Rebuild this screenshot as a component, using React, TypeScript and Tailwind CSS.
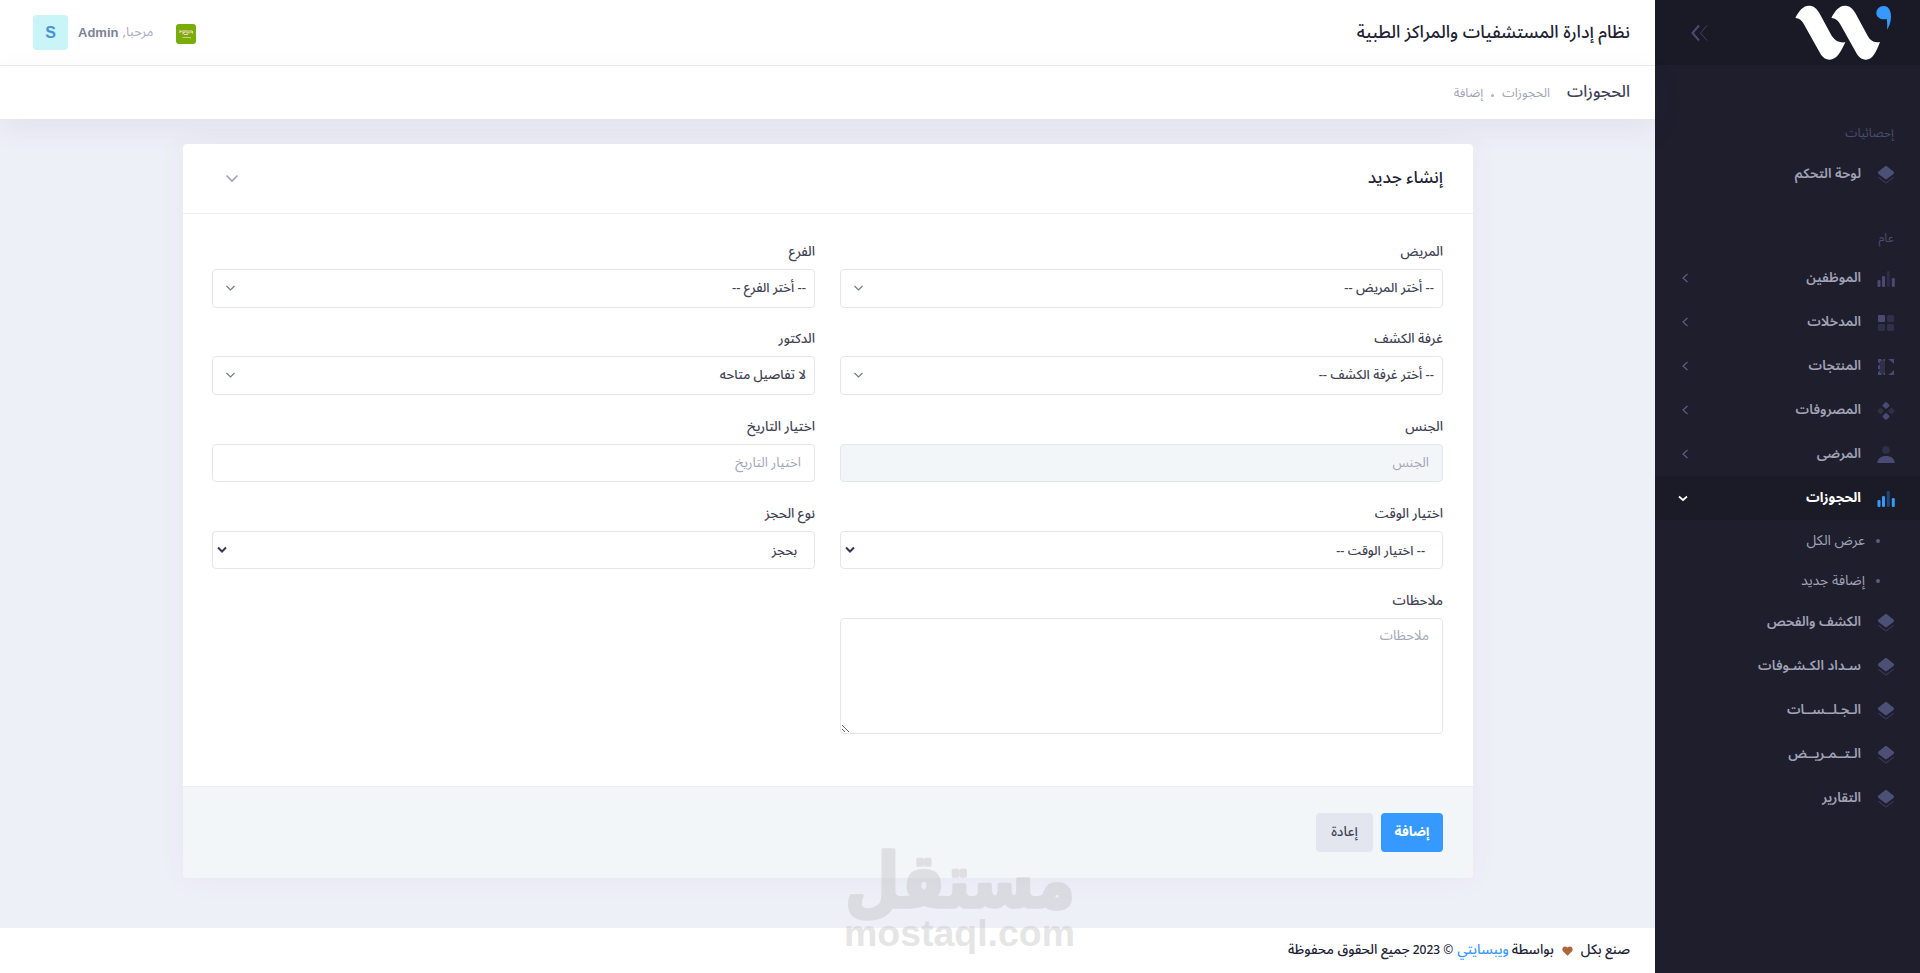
import { useState } from "react";

const FONT = "font-['Noto_Sans_Arabic','DejaVu_Sans','Liberation_Sans',sans-serif]";

type IconProps = { active?: boolean };

function LayersIcon() {
  return (
    <svg width="24" height="24" viewBox="0 0 24 24" fill="none">
      <path
        d="M12.9 3.3 19.5 8.5C20.2 9.1 20.2 10.3 19.5 10.9L12.9 16C12.4 16.4 11.6 16.4 11.1 16L4.5 10.9C3.8 10.3 3.8 9.1 4.5 8.5L11.1 3.3C11.6 2.9 12.4 2.9 12.9 3.3Z"
        fill="#4d4f77"
      />
      <path d="M4.3 14.3 12 20 19.7 14.3" stroke="#494b74" strokeOpacity="0.55" strokeWidth="1.1" />
    </svg>
  );
}

function ChartIcon({ active }: IconProps) {
  const color = active ? "#3699ff" : "#494b74";
  return (
    <svg width="24" height="24" viewBox="0 0 24 24" fill={color}>
      <rect x="3.5" y="13" width="3" height="7" rx="1.2" />
      <rect x="8" y="9" width="3" height="11" rx="1.2" />
      <rect x="12.8" y="4" width="3" height="16" rx="1.2" opacity="0.35" />
      <rect x="17.8" y="11" width="3" height="9" rx="1.2" />
    </svg>
  );
}

function BlocksIcon() {
  return (
    <svg width="24" height="24" viewBox="0 0 24 24" fill="#494b74">
      <rect x="4" y="4" width="7" height="7" rx="1" />
      <g opacity="0.4">
        <rect x="13" y="4" width="7" height="7" rx="1.5" />
        <rect x="4" y="13" width="7" height="7" rx="1.5" />
        <rect x="13" y="13" width="7" height="7" rx="1.5" />
      </g>
    </svg>
  );
}

function SelectionIcon() {
  return (
    <svg width="24" height="24" viewBox="0 0 24 24" fill="none" stroke="#494b74" strokeWidth="2">
      <rect x="5" y="5" width="6" height="14" fill="#494b74" opacity="0.4" stroke="none" />
      <path d="M7.500 5H5V7.500M5 10.500V14M5 16.500V19H7.500M9.500 19H11M9.500 5H11" />
      <path d="M14 4H20V9L17.500 6.500ZM20 15V20H14L17.500 17.500Z" fill="#494b74" stroke="none" />
    </svg>
  );
}

function DiamondsIcon() {
  return (
    <svg width="24" height="24" viewBox="0 0 24 24" fill="#494b74">
      <rect x="9.2" y="3.7" width="5.500" height="5.500" rx="1" transform="rotate(45 12 6.5)" />
      <rect x="9.2" y="14.7" width="5.500" height="5.500" rx="1" transform="rotate(45 12 17.5)" />
      <g opacity="0.4">
        <rect x="4" y="9.5" width="5" height="5" rx="1" transform="rotate(45 6.5 12)" />
        <rect x="15" y="9.5" width="5" height="5" rx="1" transform="rotate(45 17.5 12)" />
      </g>
    </svg>
  );
}

function UserIcon() {
  return (
    <svg width="24" height="24" viewBox="0 0 24 24" fill="#494b74">
      <circle cx="12" cy="7" r="3.8" opacity="0.4" />
      <path d="M3.3 20C3.6 15.500 7 13 12 13S20.400 15.500 20.700 20Z" />
    </svg>
  );
}

const mainItems = [
  { title: "الموظفين", icon: <ChartIcon /> },
  { title: "المدخلات", icon: <BlocksIcon /> },
  { title: "المنتجات", icon: <SelectionIcon /> },
  { title: "المصروفات", icon: <DiamondsIcon /> },
  { title: "المرضى", icon: <UserIcon /> },
];

const bottomItems = [
  "الكشف والفحص",
  "سـداد الكـشـوفات",
  "الـجـلــســات",
  "الـتــمـريــض",
  "التقارير",
];

function Logo() {
  return (
    <svg width="100" height="60" viewBox="430 10 300 180">
      <g fill="#fff">
        <path d="M437 55C448 32 462 18 477 18C492 18 501 26 509 40L543 103C553 121 565 130 587 128C572 160 560 180 540 180C525 180 517 170 511 160L469 85C458 64 452 56 437 55Z" />
        <path d="M545 55C556 32 570 18 585 18C600 18 609 26 617 40L651 103C660 121 670 130 691 127C678 160 668 180 649 180C634 180 626 170 620 160L578 85C567 64 560 56 545 55Z" />
      </g>
      <path d="M702 19C717 19 724 34 724 50C724 67 719 81 712 90C713 79 713 70 711 58C695 62 680 54 680 40C680 28 690 19 702 19Z" fill="#3699ff" />
    </svg>
  );
}

function MenuItem({ title, icon, arrow }: { title: string; icon: React.ReactNode; arrow?: boolean }) {
  return (
    <li className="flex h-11 items-center pr-[22px] pl-[26px] cursor-pointer">
      <span className="w-[37px] shrink-0 pt-0.5">{icon}</span>
      <span className="grow text-[13.5px] font-semibold text-[#a2a3b7]">{title}</span>
      {arrow && (
        <svg width="8" height="10" viewBox="0 0 8 10" fill="none" stroke="#5c5e81" strokeWidth="1.2">
          <path d="M6.500 1 2 5 6.500 9" />
        </svg>
      )}
    </li>
  );
}

function Sidebar() {
  const [open, setOpen] = useState<boolean>(true);

  return (
    <aside className="flex w-[265px] shrink-0 flex-col bg-[#1e1e2d]">
      <div className="flex h-[65px] items-start justify-between bg-[#1a1a27] pr-[27px] pl-9 pt-[3px]">
        <Logo />
        <svg className="mt-[21px]" width="18" height="18" viewBox="0 0 18 18" fill="none" stroke="#494b74">
          <path d="M8 1.500 1.500 9 8 16.500" strokeWidth="2" />
          <path d="M16 1.500 9.500 9 16 16.500" strokeWidth="1" opacity="0.8" />
        </svg>
      </div>
      <ul className="pt-[46px]">
        <li className="flex h-[41px] items-center pr-[26px] pt-1 text-[12.2px] text-[#4c4e6f]">إحصائيات</li>
        <MenuItem title="لوحة التحكم" icon={<LayersIcon />} />
        <li className="mt-5 flex h-10 items-center pr-[26px] pt-1 text-[12.2px] text-[#4c4e6f]">عام</li>
        {mainItems.map((item) => (
          <MenuItem key={item.title} title={item.title} icon={item.icon} arrow />
        ))}
        <li
          onClick={() => setOpen(!open)}
          className="flex h-11 items-center bg-[#1b1b28] pr-[22px] pl-[23px] cursor-pointer"
        >
          <span className="w-[37px] shrink-0 pt-0.5">
            <ChartIcon active />
          </span>
          <span className="grow text-[13.5px] font-bold text-white">الحجوزات</span>
          <svg width="10" height="8" viewBox="0 0 10 8" fill="none" stroke="#fff" strokeWidth="1.7">
            <path d="M1 2.500 5 6 9 2.500" />
          </svg>
        </li>
        {open &&
          ["عرض الكل", "إضافة جديد"].map((sub) => (
            <li key={sub} className="flex h-10 items-center gap-[11px] pr-10 text-[14px] text-[#a2a3b7]">
              <span className="mt-0.5 h-1 w-1 rounded-full bg-[#5c5e81]" />
              {sub}
            </li>
          ))}
        {bottomItems.map((title) => (
          <MenuItem key={title} title={title} icon={<LayersIcon />} />
        ))}
      </ul>
    </aside>
  );
}

function Header() {
  return (
    <>
      <header className="flex h-[66px] items-center justify-between border-b border-[#ebedf3] bg-white pr-[25px] pl-[33px]">
        <h1 className="pt-0.5 text-[17.5px] font-medium text-[#212133]">نظام إدارة المستشفيات والمراكز الطبية</h1>
        <div className="flex items-center">
          <svg className="mt-0.5" width="20" height="20" viewBox="0 0 20 20" fill="none">
            <rect width="20" height="20" rx="3" fill="#78ae0a" />
            <path
              d="M4 6V9M6 7.500H4M7 6V9.500L9 8V6M11 6V9H13V6.500M15 6V9M16.500 7V9.500M8 10.500H12"
              stroke="#f0cdb8"
              strokeWidth="1.200"
            />
            <path d="M6.500 13.500H14.500V14.500" stroke="#dfc99a" strokeWidth="0.900" />
          </svg>
          <span className="mr-[23px] text-[13px] text-[#a9abbd]">مرحبا,</span>
          <span className="mr-1 font-['Liberation_Sans',sans-serif] text-[13px] font-bold text-[#7e8299]">Admin</span>
          <span className="mr-[10px] flex h-[35px] w-[35px] items-center justify-center rounded bg-[#c9f4f8] font-['Liberation_Sans',sans-serif] text-[16px] font-bold text-[#4b8fd4]">
            S
          </span>
        </div>
      </header>
      <div className="flex h-[53px] items-center bg-white pr-[25px] shadow-[0_10px_30px_0_rgba(82,63,105,0.08)]">
        <h2 className="text-[16.2px] font-medium text-[#3f4254]">الحجوزات</h2>
        <div className="mr-[17px] flex items-center gap-2 pt-px text-[12.5px] text-[#a0a2b6]">
          <span>الحجوزات</span>
          <span className="mt-1 h-[3px] w-[3px] rounded-full bg-[#b5b5c3]" />
          <span>إضافة</span>
        </div>
      </div>
    </>
  );
}

function Label({ children }: { children: string }) {
  return (
    <label className="mb-[7px] flex h-5 items-center pt-0.5 text-[13.3px] font-medium text-[#3f4254]">{children}</label>
  );
}

const fieldBox = "flex items-center justify-between rounded border border-[#e4e6ef]";

// searchable dropdown
function PickerField({ label, text }: { label: string; text: string }) {
  return (
    <div className="h-[87px]">
      <Label>{label}</Label>
      <div className={`${fieldBox} h-[39px] pr-2 pl-[13px]`}>
        <span className="text-[13px] font-medium text-[#3f4254]">{text}</span>
        <svg width="9" height="7" viewBox="0 0 9 7" fill="none" stroke="#74788d" strokeWidth="1.200">
          <path d="M0.500 1 4.500 5 8.500 1" />
        </svg>
      </div>
    </div>
  );
}

function InputField({ label, disabled }: { label: string; disabled?: boolean }) {
  return (
    <div className="h-[87px] pt-px">
      <Label>{label}</Label>
      <input
        disabled={disabled}
        placeholder={label}
        className="block h-[38px] w-full rounded border border-[#e4e6ef] bg-white px-[13px] text-[13.3px] placeholder:text-[#a3a5b8] disabled:bg-[#f3f6f9]"
      />
    </div>
  );
}

function NativeField({ label, text }: { label: string; text: string }) {
  return (
    <div className="h-[87px] pt-px">
      <Label>{label}</Label>
      <div className={`${fieldBox} h-[38px] pr-[17px] pl-1`}>
        <span className="pt-0.5 text-[12.8px] font-medium text-[#3f4254]">{text}</span>
        <svg width="10" height="8" viewBox="0 0 10 8" fill="none" stroke="#34365a" strokeWidth="2">
          <path d="M1 1.500 5 5.500 9 1.500" />
        </svg>
      </div>
    </div>
  );
}

function BookingForm() {
  return (
    <section className="mr-[182px] mt-[25px] w-[1290px] rounded bg-white shadow-[0_0_30px_0_rgba(82,63,105,0.05)]">
      <div className="flex h-[70px] items-center justify-between border-b border-[#ebedf3] px-[30px]">
        <h3 className="text-[17px] font-medium text-[#212133]">إنشاء جديد</h3>
        <svg className="ml-3" width="14" height="9" viewBox="0 0 14 9" fill="none" stroke="#a1a5b7" strokeWidth="1.700">
          <path d="M1.500 1.500 7 7 12.500 1.500" />
        </svg>
      </div>
      <div className="grid h-[572px] grid-cols-2 content-start gap-x-[25px] pr-[30px] pl-[29px] pt-[28px]">
        <PickerField label="المريض" text="-- أختر المريض --" />
        <PickerField label="الفرع" text="-- أختر الفرع --" />
        <PickerField label="غرفة الكشف" text="-- أختر غرفة الكشف --" />
        <PickerField label="الدكتور" text="لا تفاصيل متاحه" />
        <InputField label="الجنس" disabled />
        <InputField label="اختيار التاريخ" />
        <NativeField label="اختيار الوقت" text="-- اختيار الوقت --" />
        <NativeField label="نوع الحجز" text="بحجز" />
        <div className="pt-px">
          <Label>ملاحظات</Label>
          <textarea
            placeholder="ملاحظات"
            className="block h-[116px] w-full resize rounded border border-[#e4e6ef] px-[13px] py-2 text-[13.3px] placeholder:text-[#a3a5b8]"
          />
        </div>
      </div>
      <div className="flex h-[92px] items-center gap-2 rounded-b border-t border-[#ebedf3] bg-[#f3f6f9] px-[30px]">
        <button className="h-[39px] w-[62px] rounded bg-[#3699ff] text-[13.3px] font-bold text-white">إضافة</button>
        <button className="h-[39px] w-[57px] rounded bg-[#e4e6ef] text-[13.5px] font-medium text-[#3f4254]">إعادة</button>
      </div>
    </section>
  );
}

function Footer() {
  return (
    <footer className="mt-auto flex h-[45px] items-center gap-[3px] bg-white pr-[25px] text-[13.6px] font-medium text-[#212133]">
      <span>صنع بكل</span>
      <svg className="mx-[5px]" width="11" height="10" viewBox="0 0 11 10" fill="#b0653f">
        <path d="M5.500 9.800 1 5.200C-1 2.500 2-1.300 5.500 1.500C9-1.300 12 2.500 10 5.200Z" />
      </svg>
      <span>بواسطة</span>
      <span className="text-[#3699ff]">ويبسايتي</span>
      <span className="mr-px text-[12px]">© 2023</span>
      <span>جميع الحقوق محفوظة</span>
    </footer>
  );
}

function Watermark() {
  return (
    <svg
      className="pointer-events-none absolute top-[810px] left-[840px] z-20 opacity-40"
      width="240"
      height="160"
      viewBox="0 0 240 160"
      direction="ltr"
      fill="#bfbfbf"
    >
      <text
        x="5"
        y="97"
        textLength="230"
        lengthAdjust="spacingAndGlyphs"
        stroke="#bfbfbf"
        strokeWidth="3.5"
        strokeLinejoin="round"
        className="font-['DejaVu_Sans',sans-serif] text-[75px] font-bold"
      >
        مستقل
      </text>
      <text
        x="4"
        y="136"
        textLength="231"
        lengthAdjust="spacingAndGlyphs"
        className="font-['Liberation_Sans',sans-serif] text-[37px] font-bold"
      >
        mostaql.com
      </text>
    </svg>
  );
}

export default function App() {
  return (
    <div dir="rtl" className={`relative flex h-[973px] w-[1920px] overflow-hidden bg-[#eef0f8] ${FONT}`}>
      <Sidebar />
      <main className="flex grow flex-col">
        <Header />
        <BookingForm />
        <Footer />
      </main>
      <Watermark />
    </div>
  );
}
